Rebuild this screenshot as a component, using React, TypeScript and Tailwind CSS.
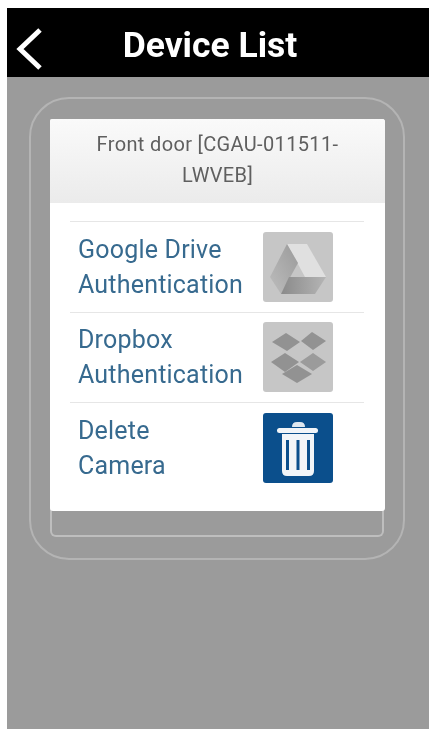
function DriveIcon() {
  return (
    <svg viewBox="0 0 70 70" className="h-[70px] w-[70px] rounded-[3px] bg-[#c6c6c6]">
      <defs>
        <linearGradient id="driveBottom" x1="0" y1="0" x2="1" y2="0">
          <stop offset="0" stopColor="#8a8a8a" />
          <stop offset="1" stopColor="#b5b5b5" />
        </linearGradient>
        <linearGradient id="driveLeft" x1="1" y1="0" x2="0" y2="1">
          <stop offset="0" stopColor="#9a9a9a" />
          <stop offset="1" stopColor="#bdbdbd" />
        </linearGradient>
      </defs>
      <path d="M24 12 L44 12 L63 45 L42 45 Z" fill="#e0e0e0" />
      <path d="M24 12 L35 31 L18 62 L7 45 Z" fill="url(#driveLeft)" />
      <path d="M26 45 L63 45 L52 62 L18 62 Z" fill="url(#driveBottom)" />
    </svg>
  );
}

function DropboxIcon() {
  return (
    <svg viewBox="0 0 70 70" className="h-[70px] w-[70px] rounded-[3px] bg-[#c6c6c6]">
      <path d="M23 11 L37 20 L24 29 L9 20 Z" fill="#929292" />
      <path d="M49 10 L63 19 L50 28 L38 19 Z" fill="#929292" />
      <path d="M22 31 L36 40 L22 50 L8 40 Z" fill="#929292" />
      <path d="M50 31 L63 40 L50 49 L37 40 Z" fill="#9b9b9b" />
      <path d="M34 43 L49 52 L34 61 L19 52 Z" fill="#929292" />
    </svg>
  );
}

function TrashIcon() {
  return (
    <svg viewBox="0 0 70 70" className="h-[70px] w-[70px] rounded-[3px] bg-[#0b4f8c]">
      <path d="M29 14 Q29 9 34 9 L37 9 Q42 9 42 14 Z" fill="#dfe8f0" />
      <rect x="14" y="15" width="41" height="5" rx="2.5" fill="#f2f5f8" />
      <path
        fillRule="evenodd"
        d="M19 21 L51 21 L51 58 Q51 63 46 63 L24 63 Q19 63 19 58 Z M23 27 L23 57 L26 57 L26 27 Z M33.5 27 L33.5 57 L36.5 57 L36.5 27 Z M44 27 L44 57 L47 57 L47 27 Z"
        fill="#f2f5f8"
      />
    </svg>
  );
}

const rows = [
  { id: 'drive', lines: ['Google Drive', 'Authentication'], icon: <DriveIcon /> },
  { id: 'dropbox', lines: ['Dropbox', 'Authentication'], icon: <DropboxIcon /> },
  { id: 'delete', lines: ['Delete', 'Camera'], icon: <TrashIcon /> },
];

export default function App() {
  return (
    <div className="h-[731px] w-[429px] overflow-hidden bg-white pb-[2px] pl-[7px] pt-[8px] font-['Roboto',sans-serif] blur-[0.7px]">
      <div className="flex h-full flex-col bg-[#9b9b9b]">
        <header className="relative flex h-[69px] shrink-0 items-center justify-center bg-black pr-[16px] pt-[6px]">
          <svg viewBox="0 0 30 44" className="absolute left-[7px] top-[19px] h-[44px] w-[30px]" fill="none">
            <path d="M26 3 L6 22 L26 41" stroke="#fff" strokeWidth="5" />
          </svg>
          <h1 className="text-[35.5px] font-bold leading-none text-white">Device List</h1>
        </header>

        <div className="ml-[22px] mt-[20px] h-[463px] w-[376px] rounded-[40px] border-2 border-[#b4b4b4] px-[19px] pt-[20px]">
          <div className="h-[418px] rounded-b-[6px] border-2 border-t-0 border-[#bebebe]">
            <div className="-ml-[2px] w-[335px] overflow-hidden rounded-[3px] bg-white">
              <div className="flex h-[84px] items-center justify-center bg-gradient-to-b from-[#fafafa] to-[#ebebeb] px-[40px] pb-[2px] text-center text-[20px] leading-[31px] tracking-[0.35px] text-[#5f5f5f]">
                Front door [CGAU-011511-LWVEB]
              </div>
              <div className="pb-[18px] pl-[20px] pr-[21px] pt-[18px]">
                {rows.map((row) => (
                  <div key={row.id} className="flex h-[90.5px] items-center border-t border-[#e6e6e6] pl-[8px]">
                    <div className="w-[185px] text-[25px] leading-[35px] tracking-[0.2px] text-[#376a8f]">
                      {row.lines.map((line) => (
                        <div key={line}>{line}</div>
                      ))}
                    </div>
                    {row.icon}
                  </div>
                ))}
              </div>
            </div>
          </div>
        </div>
      </div>
    </div>
  );
}
